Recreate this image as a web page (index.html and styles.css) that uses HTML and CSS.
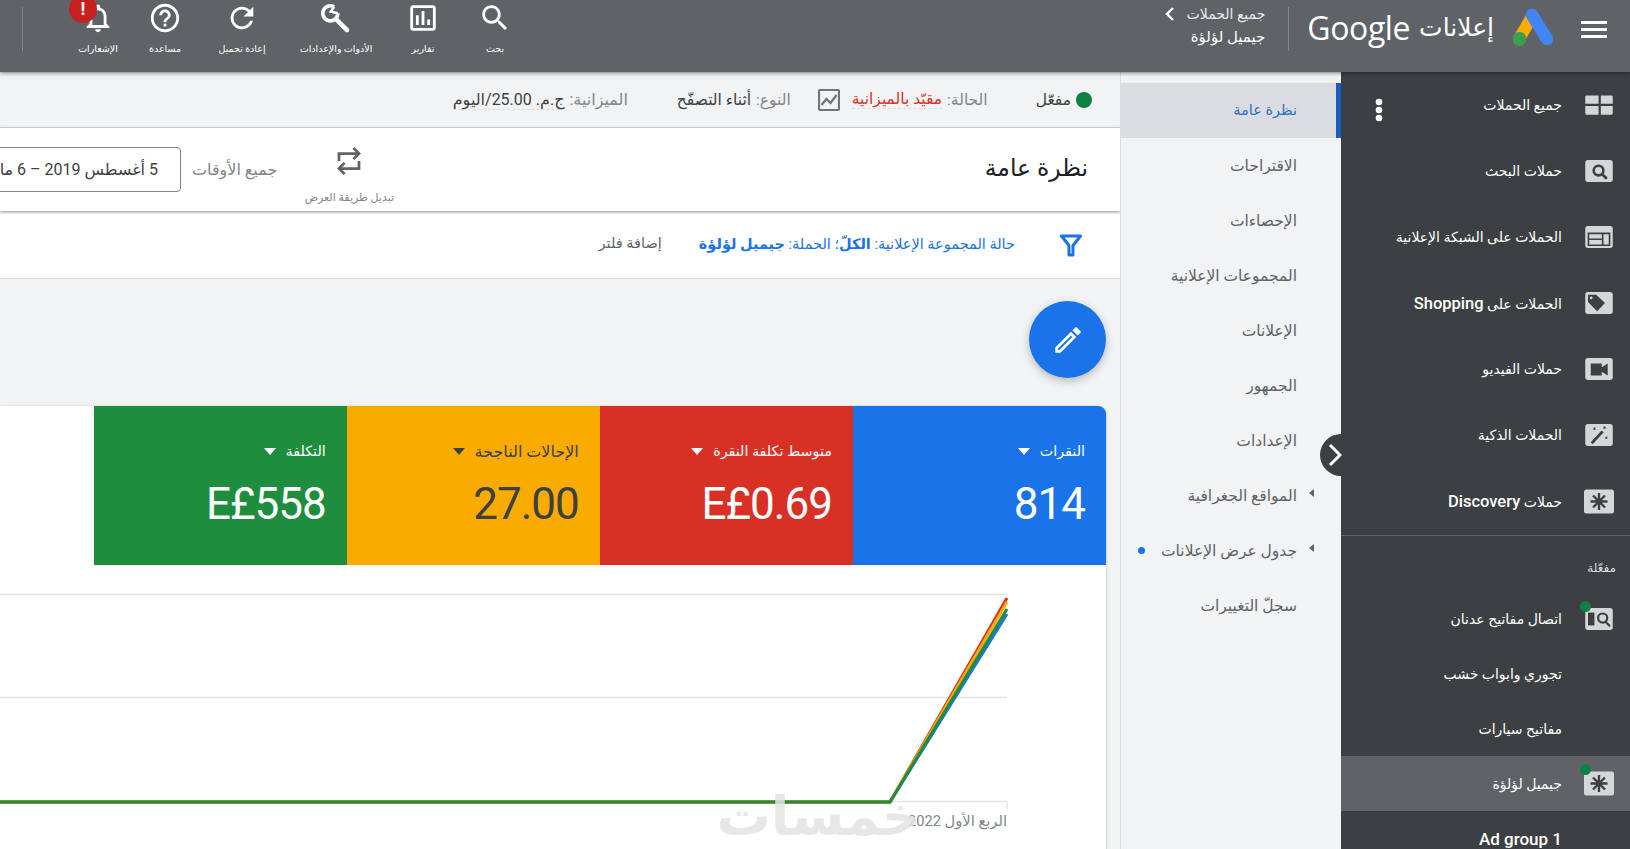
FILE: index.html
```html
<!DOCTYPE html>
<html lang="ar" dir="rtl">
<head>
<meta charset="UTF-8">
<title>إعلانات Google</title>
<link rel="stylesheet" href="styles.css">
</head>
<body>

<header class="topbar">
    <svg class="menu-btn" viewBox="0 0 26 18"><path d="M0 1h26v3H0zM0 8h26v3H0zM0 15h26v3H0z" fill="#fff"/></svg>
    <svg class="ads-logo" viewBox="0 0 40 37">
        <path d="M20 6L6 30" stroke="#f9ab00" stroke-width="12" fill="none"/>
        <path d="M19 6l15 24" stroke="#4285f4" stroke-width="12.500" stroke-linecap="round" fill="none"/>
        <circle cx="6.500" cy="30" r="7" fill="#3d9e4f"/>
    </svg>
    <div class="wordmark"><span class="wordmark-ar">إعلانات</span> <span class="wordmark-en">Google</span></div>
    <div class="vline"></div>
    <div class="crumbs">
        <div class="crumb-up">جميع الحملات
            <svg viewBox="0 0 10 16"><path d="M8 2L2 8l6 6" stroke="#fff" stroke-width="2.400" fill="none"/></svg>
        </div>
        <div class="crumb-name">جيميل لؤلؤة</div>
    </div>

    <div class="tools">
        <div class="tool">
            <svg viewBox="0 0 24 24"><path d="M15.500 14h-.79l-.28-.27C15.410 12.590 16 11.110 16 9.500 16 5.910 13.090 3 9.500 3S3 5.910 3 9.500 5.910 16 9.500 16c1.610 0 3.090-.59 4.230-1.570l.27.28v.79l5 4.990L20.490 19l-4.990-5zm-6 0C7.010 14 5 11.990 5 9.500S7.010 5 9.500 5 14 7.010 14 9.500 11.990 14 9.500 14z"/></svg>
            <span>بحث</span>
        </div>
        <div class="tool">
            <svg viewBox="0 0 24 24"><path d="M19 3H5c-1.100 0-2 .9-2 2v14c0 1.100.9 2 2 2h14c1.100 0 2-.9 2-2V5c0-1.100-.9-2-2-2zm0 16H5V5h14v14zM7 10h2v7H7zm4-3h2v10h-2zm4 6h2v4h-2z"/></svg>
            <span>تقارير</span>
        </div>
        <div class="tool">
            <svg viewBox="0 0 24 24">
                <path d="M10.650 4.100A5.300 5.300 0 1 0 13.300 8.700" fill="none" stroke="#fff" stroke-width="2.600"/>
                <path d="M10.650 4.100L8.300 7.600l5 1.100" fill="none" stroke="#fff" stroke-width="1.800"/>
                <path d="M11.800 12.600l8 8" fill="none" stroke="#fff" stroke-width="3.200" stroke-linecap="round"/>
            </svg>
            <span>الأدوات والإعدادات</span>
        </div>
        <div class="tool">
            <svg viewBox="0 0 24 24"><path d="M17.650 6.350C16.200 4.900 14.210 4 12 4c-4.420 0-7.990 3.580-7.990 8s3.570 8 7.990 8c3.730 0 6.840-2.550 7.730-6h-2.080c-.82 2.330-3.040 4-5.650 4-3.310 0-6-2.690-6-6s2.690-6 6-6c1.660 0 3.140.69 4.220 1.780L13 11h7V4l-2.350 2.350z"/></svg>
            <span>إعادة تحميل</span>
        </div>
        <div class="tool">
            <svg viewBox="0 0 24 24"><path d="M11 18h2v-2h-2v2zm1-16C6.480 2 2 6.480 2 12s4.480 10 10 10 10-4.480 10-10S17.520 2 12 2zm0 18c-4.410 0-8-3.590-8-8s3.590-8 8-8 8 3.590 8 8-3.590 8-8 8zm0-14c-2.210 0-4 1.790-4 4h2c0-1.100.9-2 2-2s2 .9 2 2c0 2-3 1.750-3 5h2c0-2.250 3-2.500 3-5 0-2.210-1.790-4-4-4z"/></svg>
            <span>مساعدة</span>
        </div>
        <div class="tool tool-bell">
            <svg viewBox="0 0 24 24"><path d="M12 22c1.100 0 2-.9 2-2h-4c0 1.100.89 2 2 2zm6-6v-5c0-3.070-1.640-5.640-4.500-6.320V4c0-.83-.67-1.500-1.500-1.500s-1.500.67-1.500 1.500v.68C7.630 5.360 6 7.920 6 11v5l-2 2v1h16v-1l-2-2zm-2 1H8v-6c0-2.480 1.510-4.500 4-4.500s4 2.020 4 4.500v6z"/></svg>
            <span>الإشعارات</span>
            <b class="bell-badge">!</b>
        </div>
    </div>
    <div class="vline vline-end"></div>
</header>

<div class="workspace">

    <aside class="sidebar">
        <div class="side-row">
            <svg class="camp-icon" viewBox="0 0 30 24"><path d="M0 3a1.500 1.500 0 011.500-1.500h13v9H0zM17 1.500h11.500A1.500 1.500 0 0130 3v7.500H17zM0 13h14.500v9.500h-13A1.500 1.500 0 010 21zM17 13h13v8a1.500 1.500 0 01-1.500 1.500H17z" fill="#d4d6d7"/></svg>
            <span>جميع الحملات</span>
            <svg class="kebab" viewBox="0 0 8 24"><circle cx="4" cy="4" r="3.300"/><circle cx="4" cy="12" r="3.300"/><circle cx="4" cy="20" r="3.300"/></svg>
        </div>
        <div class="side-row">
            <svg class="camp-icon" viewBox="0 0 30 24"><rect width="30" height="24" rx="3" fill="#d4d6d7"/><circle cx="14.500" cy="11.500" r="5.300" fill="none" stroke="#3c4043" stroke-width="2.800"/><path d="M18.500 15.500l5 5" stroke="#3c4043" stroke-width="3"/></svg>
            <span>حملات البحث</span>
        </div>
        <div class="side-row">
            <svg class="camp-icon" viewBox="0 0 30 24"><rect width="30" height="24" rx="3" fill="#d4d6d7"/><path d="M3.500 8h23v13h-23zM3.500 14.500H18M19 8v13" stroke="#3c4043" stroke-width="1.800" fill="none"/></svg>
            <span>الحملات على الشبكة الإعلانية</span>
        </div>
        <div class="side-row">
            <svg class="camp-icon" viewBox="0 0 30 24"><rect width="30" height="24" rx="3" fill="#d4d6d7"/><path d="M3 3h9l9.500 9-8.500 9L3 11zM6.500 5a1.500 1.500 0 100 3 1.500 1.500 0 000-3z" fill="#3c4043" fill-rule="evenodd"/></svg>
            <span>الحملات على <span class="latin">Shopping</span></span>
        </div>
        <div class="side-row">
            <svg class="camp-icon" viewBox="0 0 30 24"><rect width="30" height="24" rx="3" fill="#d4d6d7"/><path d="M6 6h12v4l6.500-4v13L18 15v4H6z" fill="#3c4043"/></svg>
            <span>حملات الفيديو</span>
        </div>
        <div class="side-row">
            <svg class="camp-icon" viewBox="0 0 30 24"><rect width="30" height="24" rx="3" fill="#d4d6d7"/><path d="M7 21l12-13" stroke="#3c4043" stroke-width="3"/><path d="M9 4l2 2M11 4L9 6M20 3l2 2M22 3l-2 2M22 14l2 2M24 14l-2 2" stroke="#3c4043" stroke-width="1.200"/></svg>
            <span>الحملات الذكية</span>
        </div>
        <div class="side-row">
            <svg class="camp-icon camp-icon-lg" viewBox="0 0 30 24"><rect width="30" height="24" rx="2.500" fill="#d4d6d7"/><path d="M15 3.500v17M6.500 12h17M9 6l12 12M21 6L9 18" stroke="#3c4043" stroke-width="2.400"/></svg>
            <span>حملات <span class="latin">Discovery</span></span>
        </div>

        <div class="side-label">مفعّلة</div>

        <div class="side-row side-row-short">
            <div class="camp-wrap">
                <svg class="camp-icon" viewBox="0 0 30 24"><rect width="30" height="24" rx="3" fill="#d4d6d7"/><path d="M3 5h7v14H3z" fill="#3c4043"/><circle cx="19" cy="11" r="5" fill="none" stroke="#3c4043" stroke-width="2.400"/><path d="M22 15l5 5" stroke="#3c4043" stroke-width="2.400"/></svg>
                <i class="live-dot"></i>
            </div>
            <span>اتصال مفاتيح عدنان</span>
        </div>
        <div class="side-row side-row-short side-row-plain"><span>تجوري وابواب خشب</span></div>
        <div class="side-row side-row-short side-row-plain"><span>مفاتيح سيارات</span></div>
        <div class="side-row side-row-short side-row-on">
            <div class="camp-wrap">
                <svg class="camp-icon camp-icon-lg" viewBox="0 0 30 24"><rect width="30" height="24" rx="2.500" fill="#d4d6d7"/><path d="M15 3.500v17M6.500 12h17M9 6l12 12M21 6L9 18" stroke="#3c4043" stroke-width="2.400"/></svg>
                <i class="live-dot"></i>
            </div>
            <span>جيميل لؤلؤة</span>
        </div>
        <div class="side-row side-row-short side-row-plain side-row-group"><span>Ad group 1</span></div>
    </aside>

    <nav class="subnav">
        <div class="subnav-item subnav-item-on">نظرة عامة</div>
        <div class="subnav-item">الاقتراحات</div>
        <div class="subnav-item">الإحصاءات</div>
        <div class="subnav-item">المجموعات الإعلانية</div>
        <div class="subnav-item">الإعلانات</div>
        <div class="subnav-item">الجمهور</div>
        <div class="subnav-item">الإعدادات</div>
        <div class="subnav-item subnav-item-more">المواقع الجغرافية</div>
        <div class="subnav-item subnav-item-more">جدول عرض الإعلانات<i class="subnav-dot"></i></div>
        <div class="subnav-item">سجلّ التغييرات</div>
        <div class="collapse-btn">
            <svg viewBox="0 0 14 24"><path d="M2 2l10 10L2 22" stroke="#fff" stroke-width="3" fill="none"/></svg>
        </div>
    </nav>

    <main class="main">
        <div class="status-bar">
            <div class="status-item"><i class="status-dot"></i>مفعّل</div>
            <div class="status-item status-state"><span class="muted">الحالة:</span> <span class="limited">مقيّد بالميزانية</span></div>
            <svg class="trend-icon" viewBox="0 0 22 22"><rect x="1" y="1" width="20" height="20" rx="1.500" fill="none" stroke="#70757a" stroke-width="2.200"/><path d="M3.500 16l5-6 4 4 6-8" fill="none" stroke="#70757a" stroke-width="2.200"/></svg>
            <div class="status-item status-type"><span class="muted">النوع:</span> أثناء التصفّح</div>
            <div class="status-item status-budget"><span class="muted">الميزانية:</span> <span class="dashed">ج.م. 25.00/اليوم</span></div>
        </div>

        <div class="page-head">
            <h1>نظرة عامة</h1>
            <div class="view-toggle">
                <svg viewBox="0 0 24 24"><path d="M4 12V6h16M15.500 1.500L20 6l-4.500 4.500M20 12v6H4M8.500 13.500L4 18l4.500 4.500" fill="none" stroke="#5f6368" stroke-width="2.200"/></svg>
                <span>تبديل طريقة العرض</span>
            </div>
            <div class="range-name">جميع الأوقات</div>
            <div class="range-box">5 أغسطس 2019 – 6 مارس 2022</div>
        </div>

        <div class="filter-bar">
            <svg class="funnel" viewBox="0 0 24 24"><path d="M2.500 3h19L14 12.500V22h-4v-9.500z" fill="none" stroke="#1a73e8" stroke-width="3" stroke-linejoin="round"/></svg>
            <div class="filter-text">حالة المجموعة الإعلانية: <b>الكلّ</b>؛ الحملة: <b>جيميل لؤلؤة</b></div>
            <div class="filter-add">إضافة فلتر</div>
        </div>

        <div class="fab-row">
            <div class="fab">
                <svg viewBox="0 0 24 24"><path fill="#fff" d="M3 17.250V21h3.750L17.810 9.940l-3.750-3.750L3 17.250zM5.920 19H5v-.92l9.060-9.060.92.92L5.920 19zM20.710 7.040a.996.996 0 000-1.410l-2.340-2.340c-.2-.2-.45-.29-.71-.29s-.51.1-.7.29l-1.830 1.830 3.750 3.750 1.830-1.830z"/></svg>
            </div>
        </div>

        <section class="card">
            <div class="scores">
                <div class="score score-blue"><div class="score-name">النقرات</div><div class="score-val">814</div></div>
                <div class="score score-red"><div class="score-name">متوسط تكلفة النقرة</div><div class="score-val">E£0.69</div></div>
                <div class="score score-yellow"><div class="score-name">الإحالات الناجحة</div><div class="score-val">27.00</div></div>
                <div class="score score-green"><div class="score-name">التكلفة</div><div class="score-val">E£558</div></div>
            </div>
            <div class="chart">
                <svg viewBox="0 0 1106 285">
                    <path d="M0 29.500H1007M0 132.500H1007M0 236.500H1007M1007 236.500v8" stroke="#e3e4e5" stroke-width="1.500" fill="none"/>
                    <path d="M0 237H890L1007 49" stroke="#1a73e8" stroke-width="3" fill="none"/>
                    <path d="M0 237H890L1007 33" stroke="#d93025" stroke-width="3" fill="none"/>
                    <path d="M0 237H890L1007 37" stroke="#f9ab00" stroke-width="3" fill="none"/>
                    <path d="M0 237H890L1007 44" stroke="#1e8e3e" stroke-width="3" fill="none"/>
                </svg>
                <div class="axis-label">الربع الأول 2022</div>
                <div class="watermark">خمسات</div>
            </div>
        </section>
    </main>

</div>
</body>
</html>
```

FILE: styles.css
```css
* {
    box-sizing: border-box;
}

html, body {
    margin: 0;
    height: 100%;
    overflow: hidden;
}

body {
    font-family: Roboto, "DejaVu Sans", sans-serif;
    font-size: 14px;
    color: #3c4043;
    display: flex;
    flex-direction: column;
}

/* top bar */
.topbar {
    height: 72px;
    flex: none;
    display: flex;
    align-items: center;
    background: #5f6368;
    color: #fff;
    padding-right: 23px;
    position: relative;
    z-index: 3;
    box-shadow: 0 1px 4px rgba(0, 0, 0, .5);
}

.menu-btn {
    width: 26px;
    height: 18px;
    margin-top: -15px;
}

.ads-logo {
    width: 40px;
    height: 37px;
    margin: -17px 28px 0 0;
}

.wordmark {
    display: flex;
    align-items: center;
    gap: 9px;
    margin: -17px 19px 0 0;
    white-space: nowrap;
}

.wordmark-ar {
    font-size: 25px;
}

.wordmark-en {
    font-family: "Open Sans", sans-serif;
    font-size: 32px;
    letter-spacing: -.4px;
}

.vline {
    width: 1px;
    height: 44px;
    margin: -15px 18px 0 0;
    background: #80868b;
}

.crumbs {
    margin: -20px 23px 0 0;
}

.crumb-up {
    display: flex;
    align-items: center;
    gap: 12px;
    font-size: 14px;
    color: #e8eaed;
}

.crumb-up svg {
    width: 10px;
    height: 16px;
}

.crumb-name {
    margin-top: 6px;
    font-size: 15px;
}

.tools {
    margin-right: auto;
    display: grid;
    grid-template-columns: 72px 72px 102px 86px 68px 66px;
    align-self: flex-start;
    padding-top: 1px;
}

.tool {
    display: flex;
    flex-direction: column;
    align-items: center;
    position: relative;
    font-size: 9.500px;
    white-space: nowrap;
}

.tool svg {
    width: 34px;
    height: 34px;
    fill: #fff;
}

.tool span {
    margin-top: 8px;
}

.bell-badge {
    position: absolute;
    top: -6px;
    left: 4px;
    width: 28px;
    height: 28px;
    border-radius: 50%;
    background: #c5221f;
    color: #fff;
    font-size: 18px;
    line-height: 28px;
    text-align: center;
}

.vline-end {
    margin: -15px 42px 0 22px;
}

/* three columns under the top bar */
.workspace {
    flex: 1;
    min-height: 0;
    display: flex;
}

/* dark campaign list */
.sidebar {
    width: 289px;
    flex: none;
    background: #3c4043;
    color: #fff;
    overflow: hidden;
}

.side-row {
    height: 66px;
    display: flex;
    align-items: center;
    gap: 23px;
    padding: 0 17px 0 34px;
    font-size: 14px;
    white-space: nowrap;
}

.side-row-short {
    height: 55px;
}

.side-row-plain {
    padding-right: 68px;
}

.side-row-on {
    background: #5f6368;
}

.side-row-group {
    font-size: 17px;
    font-weight: 500;
}

.latin {
    font-size: 16.500px;
    font-weight: 500;
}

.camp-icon {
    width: 28px;
    height: 22px;
    flex: none;
    display: block;
}

.camp-icon-lg {
    width: 30px;
    height: 25px;
    margin: 0 -1px;
}

.camp-wrap {
    position: relative;
    flex: none;
}

.live-dot {
    position: absolute;
    top: -7px;
    right: 22px;
    width: 11px;
    height: 11px;
    border-radius: 50%;
    background: #0d8043;
}

.kebab {
    width: 8px;
    height: 24px;
    margin: 10px auto 0 0;
    fill: #fff;
}

.side-label {
    height: 56px;
    margin-top: 1px;
    border-top: 1px solid #5f6368;
    padding: 25px 14px 0 0;
    font-size: 12px;
    color: #dadce0;
}

/* second level nav */
.subnav {
    width: 221px;
    flex: none;
    position: relative;
    background: #f1f3f4;
    border-left: 1px solid #dadce0;
    padding-top: 11px;
}

.subnav-item {
    height: 55px;
    display: flex;
    align-items: center;
    padding-right: 44px;
    font-size: 15.500px;
    color: #5f6368;
    position: relative;
    white-space: nowrap;
}

.subnav-item-on {
    background: #dadce0;
    border-right: 5px solid #1a5dc0;
    padding-right: 39px;
    font-size: 14.500px;
    color: #2f6fc5;
}

.subnav-item-more::before {
    content: "";
    position: absolute;
    right: 27px;
    top: 21px;
    border: 4px solid transparent;
    border-left: 0;
    border-right: 5px solid #5f6368;
}

.subnav-dot {
    position: absolute;
    left: 17px;
    top: 24px;
    width: 7px;
    height: 7px;
    border-radius: 50%;
    background: #1a73e8;
}

.collapse-btn {
    position: absolute;
    top: 362px;
    right: -21px;
    width: 42px;
    height: 42px;
    border-radius: 50%;
    background: #3c4043;
    display: flex;
    align-items: center;
    justify-content: center;
    padding-right: 12px;
}

.collapse-btn svg {
    width: 14px;
    height: 24px;
}

/* main column */
.main {
    flex: 1;
    min-width: 0;
    display: flex;
    flex-direction: column;
    background: #f1f3f4;
    overflow: hidden;
}

.status-bar {
    height: 56px;
    flex: none;
    display: flex;
    align-items: center;
    padding-right: 28px;
    border-bottom: 1px solid #dadce0;
    font-size: 15.500px;
    white-space: nowrap;
}

.status-item {
    display: flex;
    align-items: center;
    gap: 5px;
}

.status-dot {
    width: 16px;
    height: 16px;
    border-radius: 50%;
    background: #0d8043;
}

.status-state {
    margin-right: 48px;
}

.status-type {
    margin-right: 27px;
}

.status-budget {
    margin-right: 49px;
    font-size: 16px;
}

.muted {
    color: #80868b;
}

.limited {
    color: #d93025;
    border-bottom: 1px dashed #dadce0;
}

.dashed {
    border-bottom: 1px dashed #dadce0;
}

.trend-icon {
    width: 22px;
    height: 22px;
    margin-right: 12px;
    flex: none;
}

.page-head {
    height: 83px;
    flex: none;
    display: flex;
    align-items: center;
    padding-right: 32px;
    background: #fff;
    box-shadow: 0 1px 3px rgba(0, 0, 0, .45);
    position: relative;
    white-space: nowrap;
}

.page-head h1 {
    margin: 0 0 4px auto;
    font-size: 23.500px;
    font-weight: normal;
    color: #202124;
}

.view-toggle {
    width: 88px;
    align-self: flex-start;
    padding-top: 18px;
    display: flex;
    flex-direction: column;
    align-items: center;
    gap: 15px;
    font-size: 11px;
    color: #80868b;
}

.view-toggle svg {
    width: 30px;
    height: 30px;
}

.range-name {
    margin-right: 28px;
    font-size: 16px;
    color: #80868b;
}

.range-box {
    width: 240px;
    height: 45px;
    margin: 0 11px 0 -59px;
    padding-right: 22px;
    border: 1px solid #80868b;
    border-radius: 4px;
    line-height: 43px;
    font-size: 16px;
    color: #3c4043;
    overflow: hidden;
}

.filter-bar {
    height: 68px;
    flex: none;
    display: flex;
    align-items: center;
    padding-right: 37px;
    background: #fff;
    border-bottom: 1px solid #dadce0;
    white-space: nowrap;
}

.funnel {
    width: 24px;
    height: 24px;
    flex: none;
}

.filter-text {
    margin-right: 44px;
    font-size: 14.500px;
    color: #1a73e8;
}

.filter-add {
    margin: 0 37px 2px 0;
    font-size: 14.500px;
    color: #5f6368;
}

.fab-row {
    flex: none;
    display: flex;
    padding: 22px 14px 28px;
}

.fab {
    width: 77px;
    height: 77px;
    border-radius: 50%;
    background: #1a73e8;
    box-shadow: 0 3px 8px rgba(0, 0, 0, .25);
    display: flex;
    align-items: center;
    justify-content: center;
}

.fab svg {
    width: 34px;
    height: 34px;
}

.card {
    flex: 1;
    margin-right: 14px;
    background: #fff;
    border-top-right-radius: 8px;
    box-shadow: 0 1px 3px rgba(60, 64, 67, .35);
    overflow: hidden;
}

.scores {
    display: flex;
    height: 159px;
}

.score {
    width: 253.100px;
    padding: 33px 21px 0 0;
    color: #fff;
}

.score-blue { background: #1a73e8; }
.score-red { background: #d93025; }
.score-yellow { background: #f9ab00; color: #3c4043; }
.score-green { background: #1e8e3e; }

.score-name {
    display: flex;
    align-items: center;
    gap: 10px;
    font-size: 14.300px;
    height: 24px;
}

.score-yellow .score-name {
    font-size: 16px;
}

.score-name::after {
    content: "";
    border: 6px solid transparent;
    border-top: 7px solid currentColor;
    border-bottom: 0;
}

.score-val {
    margin-top: 14px;
    font-size: 44px;
    line-height: 54px;
    letter-spacing: -1px;
}

.chart {
    position: relative;
    height: 285px;
}

.chart svg {
    display: block;
    width: 1106px;
    height: 285px;
}

.axis-label {
    position: absolute;
    top: 247px;
    right: 99px;
    font-size: 14.700px;
    color: #80868b;
    white-space: nowrap;
}

.watermark {
    position: absolute;
    top: 222px;
    right: 185px;
    font-size: 54px;
    line-height: 60px;
    font-weight: bold;
    color: #e3e3e3;
    opacity: .85;
    white-space: nowrap;
}
```
